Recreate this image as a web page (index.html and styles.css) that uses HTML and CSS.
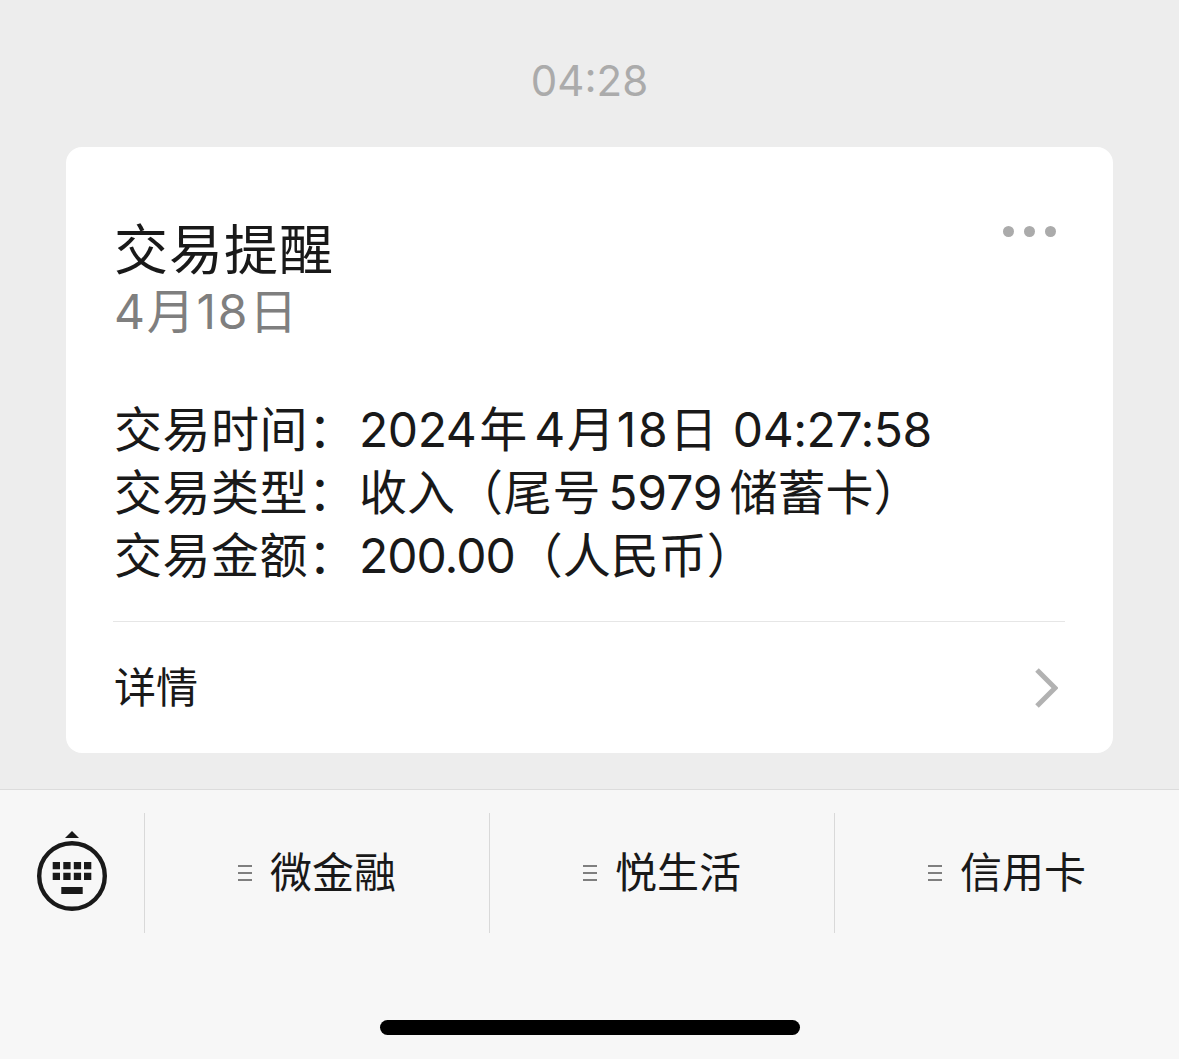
FILE: index.html
```html
<!DOCTYPE html>
<html lang="zh-CN">
<head>
    <meta charset="UTF-8">
    <meta name="viewport" content="width=device-width, initial-scale=1.0">
    <title>交易提醒</title>
    <link rel="stylesheet" href="styles.css">
</head>
<body>
    <main class="chat">
        <div class="time">04:28</div>

        <section class="card">
            <div class="card-head">
                <div>
                    <h1 class="card-title">交易提醒</h1>
                    <div class="card-date">4月18日</div>
                </div>
                <div class="dots"><i></i><i></i><i></i></div>
            </div>

            <div class="info">
                <div class="info-row"><span class="info-label">交易时间：</span><span><span class="num">2024</span><span class="gap-s"></span>年<span class="gap"></span><span class="day">4月18日</span> <span class="num">04:27:58</span></span></div>
                <div class="info-row"><span class="info-label">交易类型：</span><span>收入<span class="wide">（尾号</span><span class="gap"></span>5979<span class="gap"></span>储蓄卡）</span></div>
                <div class="info-row"><span class="info-label">交易金额：</span><span><span class="amount">200.00</span>（人民币）</span></div>
            </div>

            <div class="card-foot">
                <span class="foot-text">详情</span>
                <svg class="arrow" viewBox="0 0 24 40" width="24" height="40">
                    <path d="M3 2 L21 20 L3 38" fill="none" stroke="#b2b2b2" stroke-width="5"/>
                </svg>
            </div>
        </section>
    </main>

    <footer class="menu">
        <div class="menu-bar">
            <div class="keyboard">
                <!-- 键盘切换按钮 -->
                <svg viewBox="0 0 72 84" width="72" height="84">
                    <path d="M36 0 L43 7 L29 7 Z" fill="#191919"/>
                    <circle cx="36" cy="45" r="32.800" fill="none" stroke="#191919" stroke-width="4.400"/>
                    <path d="M16.700 31h7.300v7.300h-7.300zM27.300 31h7.300v7.300h-7.300zM37.800 31h7.300v7.300h-7.300zM48 31h7.300v7.300h-7.300zM16.700 41.700h7.300v7.300h-7.300zM27.300 41.700h7.300v7.300h-7.300zM37.800 41.700h7.300v7.300h-7.300zM48 41.700h7.300v7.300h-7.300zM25.300 56h21.400v7h-21.400z" fill="#191919"/>
                </svg>
            </div>
            <div class="menu-item"><span class="burger"><i></i><i></i><i></i></span><span class="menu-text">微金融</span></div>
            <div class="menu-item"><span class="burger"><i></i><i></i><i></i></span><span class="menu-text">悦生活</span></div>
            <div class="menu-item"><span class="burger"><i></i><i></i><i></i></span><span class="menu-text">信用卡</span></div>
        </div>
        <div class="home-bar"></div>
    </footer>
</body>
</html>
```

FILE: styles.css
```css
html, body {
    margin: 0;
    height: 100%;
}

body {
    width: 1179px;
    height: 1059px;
    overflow: hidden;
    display: flex;
    flex-direction: column;
    background-color: #ededed;
    color: #191919;
    font-family: Inter, "Noto Sans CJK SC", sans-serif;
}

.chat {
    height: 789px;
    padding: 0 66px;
    box-sizing: border-box;
}

.time {
    padding-top: 57px;
    height: 147px;
    box-sizing: border-box;
    line-height: 48px;
    font-size: 42px;
    color: #ababab;
    text-align: center;
}

.card {
    height: 606px;
    box-sizing: border-box;
    padding: 0 48px;
    background-color: #fff;
    border-radius: 16px;
}

.card-head {
    display: flex;
    justify-content: space-between;
    padding-top: 73px;
}

.card-title {
    margin: 0;
    font-size: 54px;
    font-weight: 400;
    line-height: 61px;
    letter-spacing: 1px;
}

.card-date {
    font-size: 48px;
    line-height: 62px;
    letter-spacing: 1.75px;
    color: #7f7f7f;
}

.dots {
    display: flex;
    gap: 10px;
    margin: 6px 9px 0 0;
}

.dots i {
    width: 11px;
    height: 11px;
    border-radius: 50%;
    background-color: #ababab;
}

.info {
    margin-top: 55px;
    padding-bottom: 34px;
    font-size: 48px;
    line-height: 63px;
    white-space: nowrap;
}

.info-row {
    display: flex;
}

.info-label {
    width: 245px;
    letter-spacing: 0.5px;
}

.gap {
    display: inline-block;
    width: 7px;
}

.gap-s {
    display: inline-block;
    width: 3px;
}

.num {
    letter-spacing: -0.45px;
}

.day {
    letter-spacing: 1.75px;
}

.wide {
    letter-spacing: 0.7px;
}

.amount {
    letter-spacing: -1px;
}

.card-foot {
    display: flex;
    justify-content: space-between;
    align-items: center;
    height: 132px;
    margin-left: -1px;
    padding: 0 7px 0 1px;
    border-top: 1px solid #e6e6e6;
    box-sizing: border-box;
    font-size: 42px;
}

.foot-text {
    margin-bottom: 6px;
}

.menu {
    flex: 1;
    background-color: #f7f7f7;
    border-top: 1px solid #dcdcdc;
}

.menu-bar {
    display: grid;
    grid-template-columns: 144px 345px 345px 345px;
    height: 120px;
    margin-top: 23px;
}

.keyboard {
    display: flex;
    align-items: center;
    justify-content: center;
}

.menu-item {
    display: flex;
    align-items: center;
    justify-content: center;
    gap: 18px;
    border-left: 1px solid #d9d9d9;
    font-size: 42px;
}

.menu-text {
    margin-bottom: 8px;
}

.burger {
    display: flex;
    flex-direction: column;
    gap: 5px;
}

.burger i {
    display: block;
    width: 14px;
    height: 2px;
    background-color: #7f7f7f;
}

.home-bar {
    width: 420px;
    height: 15px;
    margin: 87px auto 0;
    border-radius: 8px;
    background-color: #000;
}
```
